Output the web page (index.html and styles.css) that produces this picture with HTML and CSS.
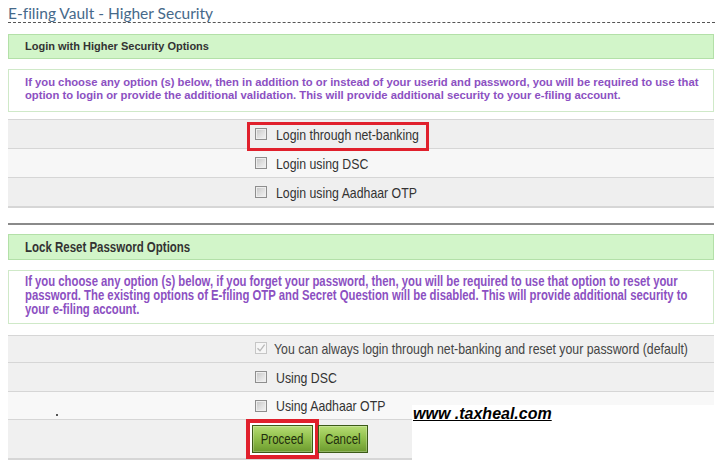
FILE: index.html
```html
<!DOCTYPE html>
<html>
<head>
<meta charset="utf-8">
<link rel="stylesheet" href="styles.css">
</head>
<body>
<div class="page">
  <h1 class="title">E-filing Vault - Higher Security</h1>

  <div class="bar bar-1">Login with Higher Security Options</div>
  <div class="note note-1">If you choose any option (s) below, then in addition to or instead of your userid and password, you will be required to use that<br>option to login or provide the additional validation. This will provide additional security to your e-filing account.</div>

  <div class="table table-1">
    <div class="row row-a row-hl"><label class="opt"><span class="cb"></span><span class="nar">Login through net-banking</span></label></div>
    <div class="row row-b"><label class="opt"><span class="cb"></span><span class="nar">Login using DSC</span></label></div>
    <div class="row row-a row-last"><label class="opt"><span class="cb"></span><span class="nar">Login using Aadhaar OTP</span></label></div>
  </div>

  <div class="divider"></div>

  <div class="bar bar-2"><span class="nar">Lock Reset Password Options</span></div>
  <div class="note note-2"><span class="nar">If you choose any option (s) below, if you forget your password, then, you will be required to use that option to reset your<br>password. The existing options of E-filing OTP and Secret Question will be disabled. This will provide additional security to<br>your e-filing account.</span></div>

  <div class="table table-2">
    <div class="row row-s1"><label class="opt opt-checked"><span class="cb cb-checked"><svg viewBox="0 0 12 12" width="12" height="12"><path d="M2.5 6.2 L5 8.8 L9.6 2.6" fill="none" stroke="#b8b8b8" stroke-width="1.3"/></svg></span><span class="nar">You can always login through net-banking and reset your password (default)</span></label></div>
    <div class="row row-s2"><label class="opt"><span class="cb"></span><span class="nar">Using DSC</span></label></div>
    <div class="row row-s3"><label class="opt"><span class="cb"></span><span class="nar">Using Aadhaar OTP</span></label><span class="dot"></span></div>
    <div class="row row-btns"><button class="btn btn-proceed btn-hl"><span class="nar-c">Proceed</span></button><button class="btn btn-cancel"><span class="nar-c">Cancel</span></button></div>
  </div>

  <div class="watermark"><span class="wm-text">www .taxheal.com</span></div>
</div>
</body>
</html>
```

FILE: styles.css
```css
html, body {
  margin: 0;
  padding: 0;
  background: #ffffff;
}

.page {
  position: relative;
  width: 720px;
  height: 472px;
  overflow: hidden;
  padding: 0 6px 0 8px;
  box-sizing: border-box;
  font-family: "Liberation Sans", Arial, sans-serif;
  font-variant-ligatures: none;
}

/* horizontally condensed text (the lower screenshot is squeezed) */
.nar {
  display: inline-block;
  transform: scaleX(0.82);
  transform-origin: left center;
  white-space: nowrap;
}

.nar-c {
  display: inline-block;
  transform: scaleX(0.82);
  transform-origin: center center;
  white-space: nowrap;
}

.title {
  margin: 0;
  padding-top: 4px;
  height: 18px;
  width: 707px;
  font-family: "Lato", "Liberation Sans", sans-serif;
  font-weight: normal;
  font-size: 15.5px;
  line-height: 18px;
  color: #46698a;
  border-bottom: 1px dashed #555;
  font-variant-ligatures: none;
}

.bar {
  box-sizing: border-box;
  background: #d2f5c9;
  border: 1px solid #b3e0a8;
  color: #333;
  font-weight: bold;
  padding-left: 16px;
}

.bar-1 {
  margin-top: 11px;
  height: 25px;
  line-height: 23px;
  font-size: 11px;
}

.bar-2 {
  margin-top: 9px;
  height: 26px;
  line-height: 24px;
  font-size: 14px;
}

.note {
  box-sizing: border-box;
  border: 1px solid #cfe9c8;
  background: #fff;
  color: #8c50c2;
  font-weight: bold;
  padding-left: 16px;
  white-space: nowrap;
}

.note-1 {
  margin-top: 10px;
  height: 43px;
  padding-top: 6px;
  font-size: 11.25px;
  line-height: 13px;
}

.note-2 {
  margin-top: 10px;
  height: 54px;
  padding-top: 4px;
  font-size: 13.8px;
  line-height: 14px;
}

.table {
  font-size: 15px;
  color: #333;
}

.table-1 { margin-top: 7px; }
.table-2 { margin-top: 11px; }

.row {
  position: relative;
  display: flex;
  align-items: center;
  box-sizing: border-box;
  border-top: 1px solid #d6d6d6;
  padding-left: 247px;
  height: 29px;
  background: #efefef;
}

.row-b { background: #f7f7f7; }
.row-last { border-bottom: 2px solid #d6d6d6; height: 31px; }

.row-hl::after {
  content: "";
  position: absolute;
  left: 239px;
  top: 2px;
  width: 182px;
  height: 29px;
  box-sizing: border-box;
  border: 3px solid #e0202c;
  z-index: 1;
}

.row-s1 { height: 27px; background: #f0f0f0; padding-bottom: 2px; }
.row-s2 { height: 29px; background: #f0f0f0; }
.row-s3 { height: 28px; background: #f8f8f8; }
.row-btns {
  height: 41px;
  background: #f0f0f0;
  border-bottom: 2px solid #d6d6d6;
  padding-left: 244px;
}

.divider {
  margin-top: 15px;
  height: 2px;
  background: #8a8a8a;
}

.opt {
  position: relative;
  display: flex;
  align-items: center;
  line-height: 17px;
  white-space: nowrap;
}

.cb {
  box-sizing: border-box;
  width: 12px;
  height: 12px;
  margin-right: 9px;
  border: 1px solid #8e8e8e;
  background: linear-gradient(135deg, #c4c4c4 0%, #dedede 50%, #f4f4f4 100%);
  box-shadow: inset 0 0 0 1px #eeeeee;
  flex: none;
}

.cb-checked {
  border-color: #c6c6c6;
  background: #f6f6f6;
  box-shadow: none;
  margin-right: 7px;
  display: flex;
}

.cb-checked svg { margin: -1px; }

.opt-checked { color: #444; }

.dot {
  position: absolute;
  left: 48px;
  top: 22px;
  width: 2px;
  height: 2px;
  background: #555;
}

.btn {
  box-sizing: border-box;
  height: 28px;
  padding: 0;
  margin: 0 5px 0 0;
  font-family: "Liberation Sans", Arial, sans-serif;
  font-size: 14px;
  color: #1f2d0c;
  border: 1px solid #3c5a18;
  background: linear-gradient(#b6dc74 0%, #93c24e 45%, #6c9a2e 100%);
  box-shadow: inset 0 0 0 1px rgba(255,255,255,0.25);
}

.btn-proceed { width: 61px; }
.btn-cancel { width: 50px; }

.btn-hl {
  box-shadow: inset 0 0 0 1px rgba(255,255,255,0.25), 0 0 0 2px #ffffff, 0 0 0 6px #e0202c;
}

.watermark {
  position: absolute;
  left: 412px;
  top: 405px;
  right: 0;
  bottom: 0;
  background: #ffffff;
  padding-left: 1px;
}

.wm-text {
  font-family: "Liberation Sans", Arial, sans-serif;
  font-weight: bold;
  font-style: italic;
  font-size: 16px;
  line-height: 16px;
  color: #000;
  text-decoration: underline;
}
```
